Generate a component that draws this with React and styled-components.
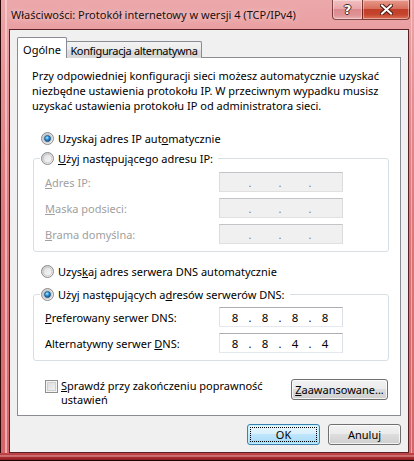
import React from 'react';
import styled, { createGlobalStyle } from 'styled-components';

const Global = createGlobalStyle`
  html, body { margin: 0; padding: 0; background: #ffffff; }
  body {
    font-family: "Noto Sans", "Segoe UI", sans-serif;
    font-size: 11px;
    color: #000;
  }
  * { box-sizing: border-box; }
`;

const Window = styled.div`
  width: 414px;
  height: 461px;
  display: flex;
  flex-direction: column;
  padding: 0 5px 8px 9px;
  background:
    linear-gradient(to top, #1c0404 0, #1c0404 1px, #8a1c20 1px, #a92f33 4px, #e7a2a4 5px, #b73c40 6px, #c04549 8px, transparent 8px),
    linear-gradient(to right, #2a0808 0, #2a0808 1px, transparent 1px, transparent 5px, rgba(255, 225, 225, 0.55) 5px, rgba(255, 225, 225, 0.55) 7px, transparent 7px),
    linear-gradient(to left, transparent 0, transparent 2px, rgba(255, 225, 225, 0.5) 2px, rgba(255, 225, 225, 0.5) 3px, transparent 3px),
    linear-gradient(to bottom, #eba8aa 0, #ea9fa2 30px, #e58f93 90px, #dc777c 220px, #d4656a 461px);
`;

const TitleBar = styled.div`
  height: 29px;
  display: flex;
  align-items: flex-start;
`;

const Title = styled.div`
  flex: 1;
  padding: 7px 0 0 2px;
  line-height: 15px;
  font-size: 11px;
  color: #1b1010;
  text-shadow: 0 0 6px rgba(255, 240, 240, 0.9);
  white-space: nowrap;
`;

const CaptionButtons = styled.div`
  display: flex;
  margin-right: -1px;
`;

const CaptionButton = styled.div`
  width: ${p => p.$w}px;
  height: 20px;
  display: flex;
  align-items: center;
  justify-content: center;
  border: 1px solid rgba(70, 15, 15, 0.65);
  border-top: none;
  border-radius: ${p => (p.$first ? '0 0 0 4px' : '0 0 4px 0')};
  margin-left: ${p => (p.$first ? '0' : '-1px')};
  box-shadow: inset 0 0 0 1px rgba(255, 235, 235, 0.45);
  background: ${p =>
    p.$close
      ? 'linear-gradient(to bottom, #e79a8c 0%, #d8705e 45%, #c2402b 50%, #c4432c 75%, #db7058 100%)'
      : 'linear-gradient(to bottom, #f1c0c1 0%, #e9a7a9 45%, #dc898c 50%, #df9396 80%, #eab1b2 100%)'};
`;

const HelpGlyph = styled.span`
  font-family: "DejaVu Sans", sans-serif;
  font-weight: bold;
  font-size: 13px;
  line-height: 1;
  color: #fff;
  text-shadow: -1px 0 #4a2424, 1px 0 #4a2424, 0 -1px #4a2424, 0 1px #4a2424;
`;

const Client = styled.div`
  flex: 1;
  display: flex;
  flex-direction: column;
  border: 1px solid #5a2227;
  background: #f0f0f0;
  padding: 7px 7px 7px 7px;
`;

const TabStrip = styled.div`
  height: 21px;
  display: flex;
  align-items: flex-end;
`;

const Tab = styled.div`
  position: relative;
  z-index: ${p => (p.$active ? 1 : 0)};
  height: ${p => (p.$active ? 21 : 17)}px;
  padding: ${p => (p.$active ? '4px 0 0 0' : '1px 0 0 0')};
  width: ${p => p.$w}px;
  margin-right: ${p => (p.$active ? '-1px' : '0')};
  text-align: center;
  line-height: 15px;
  white-space: nowrap;
  letter-spacing: ${p => (p.$active ? '0' : '-0.35px')};
  border: 1px solid #898c95;
  border-bottom: none;
  border-radius: 2px 2px 0 0;
  background: ${p => (p.$active ? '#ffffff' : 'linear-gradient(to bottom, #f3f3f3 0%, #ebebeb 50%, #dedede 50%, #d6d6d6 100%)')};
`;

const Panel = styled.div`
  margin-top: -1px;
  height: 359px;
  border: 1px solid #898c95;
  background: #ffffff;
  padding: 10px 11px 0 15px;
  display: flex;
  flex-direction: column;
`;

const Description = styled.p`
  margin: 0 0 0 -1px;
  line-height: 15px;
  color: #000;
`;

const OptionRow = styled.label`
  display: flex;
  align-items: center;
  gap: 4px;
  height: 15px;
  line-height: 15px;
  margin-left: ${p => p.$indent ?? 8}px;
  margin-top: ${p => p.$top ?? 0}px;
  white-space: nowrap;
`;

const Group = styled.fieldset`
  margin: ${p => p.$top}px 0 0 0;
  padding: 0 6px 7px 6px;
  border: 1px solid #d5dfe5;
  border-radius: 3px;
  min-width: 0;
`;

const Legend = styled.legend`
  padding: 0 5px 0 1px;
  margin: 0;
`;

const FieldGrid = styled.div`
  display: grid;
  grid-template-columns: 174px 124px;
  row-gap: 6px;
  margin: ${p => p.$top}px 0 0 5px;
  align-items: center;
`;

const FieldLabel = styled.span`
  color: ${p => (p.$disabled ? '#a0a0a0' : '#000')};
  line-height: 15px;
`;

const IpBox = styled.div`
  width: 124px;
  height: 20px;
  display: flex;
  align-items: center;
  padding: 0 2px;
  border: 1px solid;
  border-color: ${p => (p.$disabled ? '#c2c4c7 #dcdcdc #e0e0e0 #dcdcdc' : '#abadb3 #dbdfe6 #e3e9ef #e2e3ea')};
  background: ${p => (p.$disabled ? '#f0f0f0' : '#ffffff')};
`;

const Octet = styled.span`
  width: 26px;
  text-align: center;
  line-height: 15px;
  font-size: 11.5px;
`;

const Dot = styled.span`
  width: 4px;
  text-align: center;
  line-height: 15px;
  color: ${p => (p.$disabled ? '#7a7f95' : '#000')};
`;

const BottomRow = styled.div`
  display: flex;
  align-items: flex-start;
  justify-content: space-between;
  margin: 18px 1px 0 12px;
`;

const CheckLabel = styled.label`
  display: flex;
  align-items: flex-start;
  gap: 3px;
  line-height: 14px;
  padding-top: 1px;
`;

const CheckText = styled.span`
  margin-top: -1px;
`;

const CheckBox = styled.span`
  flex: none;
  width: 13px;
  height: 13px;
  border: 1px solid #8e8f8f;
  background: linear-gradient(135deg, #d8d8d8 0%, #f6f6f6 100%);
  box-shadow: inset 0 0 0 1px #f4f4f4, inset 0 0 0 2px #cfcfcf;
`;

const Button = styled.button`
  font: inherit;
  font-size: 11px;
  color: #000;
  width: ${p => p.$w}px;
  height: 21px;
  padding: 0;
  line-height: 15px;
  border: 1px solid ${p => (p.$default ? '#3c7fb1' : '#707070')};
  border-radius: 3px;
  background: ${p =>
    p.$default
      ? 'linear-gradient(to bottom, #eaf6fd 0%, #d9f0fc 45%, #bee6fd 50%, #a7d9f5 100%)'
      : 'linear-gradient(to bottom, #f2f2f2 0%, #ebebeb 45%, #dddddd 50%, #cfcfcf 100%)'};
  box-shadow: inset 0 0 0 1px ${p => (p.$default ? 'rgba(190, 240, 255, 0.9)' : 'rgba(255, 255, 255, 0.75)')};
  outline: ${p => (p.$default ? '1px dotted #000' : 'none')};
  outline-offset: -4px;
`;

const ButtonBar = styled.div`
  display: flex;
  justify-content: flex-end;
  gap: 8px;
  margin-top: 8px;
`;

function Radio({ checked }) {
  return (
    <svg width="13" height="13" viewBox="0 0 13 13" style={{ flex: 'none' }}>
      <defs>
        <linearGradient id="rOuter" x1="0" y1="0" x2="1" y2="1">
          <stop offset="0" stopColor="#c8c8c8" />
          <stop offset="1" stopColor="#fbfbfb" />
        </linearGradient>
        <linearGradient id="rInner" x1="0" y1="0" x2="1" y2="1">
          <stop offset="0" stopColor="#dcdcdc" />
          <stop offset="1" stopColor="#fafafa" />
        </linearGradient>
        <radialGradient id="rDot" cx="0.42" cy="0.38" r="0.65">
          <stop offset="0" stopColor="#b6ecff" />
          <stop offset="0.45" stopColor="#2f98dd" />
          <stop offset="1" stopColor="#0f3f78" />
        </radialGradient>
      </defs>
      <circle cx="6.5" cy="6.5" r="6" fill="url(#rOuter)" stroke="#8b8c8e" strokeWidth="1" />
      <circle cx="6.5" cy="6.5" r="4.3" fill="url(#rInner)" stroke="#b9b9b9" strokeWidth="0.6" />
      {checked && <circle cx="6.5" cy="6.5" r="3.1" fill="url(#rDot)" stroke="#18477c" strokeWidth="0.7" />}
    </svg>
  );
}

function CloseGlyph() {
  return (
    <svg width="13" height="11" viewBox="0 0 13 11">
      <path d="M2 1.5 L11 9.5 M11 1.5 L2 9.5" stroke="#4a1a12" strokeWidth="4" strokeLinecap="square" />
      <path d="M2 1.5 L11 9.5 M11 1.5 L2 9.5" stroke="#ffffff" strokeWidth="2" strokeLinecap="square" />
    </svg>
  );
}

function IpField({ values, disabled }) {
  const parts = values || ['', '', '', ''];
  return (
    <IpBox $disabled={disabled}>
      <Octet>{parts[0]}</Octet>
      <Dot $disabled={disabled}>.</Dot>
      <Octet>{parts[1]}</Octet>
      <Dot $disabled={disabled}>.</Dot>
      <Octet>{parts[2]}</Octet>
      <Dot $disabled={disabled}>.</Dot>
      <Octet>{parts[3]}</Octet>
    </IpBox>
  );
}

export default function App() {
  return (
    <>
      <Global />
      <Window>
        <TitleBar>
          <Title>Właściwości: Protokół internetowy w wersji 4 (TCP/IPv4)</Title>
          <CaptionButtons>
            <CaptionButton $w={31} $first>
              <HelpGlyph>?</HelpGlyph>
            </CaptionButton>
            <CaptionButton $w={48} $close>
              <CloseGlyph />
            </CaptionButton>
          </CaptionButtons>
        </TitleBar>
        <Client>
          <TabStrip>
            <Tab $active $w={50}>Ogólne</Tab>
            <Tab $w={136}>Konfiguracja alternatywna</Tab>
          </TabStrip>
          <Panel>
            <Description>
              Przy odpowiedniej konfiguracji sieci możesz automatycznie uzyskać
              <br />
              niezbędne ustawienia protokołu IP. W przeciwnym wypadku musisz
              <br />
              uzyskać ustawienia protokołu IP od administratora sieci.
            </Description>

            <OptionRow $top={18}>
              <Radio checked />
              <span>Uzyskaj adres IP aut<u>o</u>matycznie</span>
            </OptionRow>

            <Group $top={5}>
              <Legend>
                <OptionRow $indent={0}>
                  <Radio />
                  <span><u>U</u>żyj następującego adresu IP:</span>
                </OptionRow>
              </Legend>
              <FieldGrid $top={6}>
                <FieldLabel $disabled><u>A</u>dres IP:</FieldLabel>
                <IpField disabled />
                <FieldLabel $disabled><u>M</u>aska podsieci:</FieldLabel>
                <IpField disabled />
                <FieldLabel $disabled><u>B</u>rama domyślna:</FieldLabel>
                <IpField disabled />
              </FieldGrid>
            </Group>

            <OptionRow $top={12}>
              <Radio />
              <span>Uzys<u>k</u>aj adres serwera DNS automatycznie</span>
            </OptionRow>

            <Group $top={8}>
              <Legend>
                <OptionRow $indent={0}>
                  <Radio checked />
                  <span>Użyj następujących a<u>d</u>resów serwerów DNS:</span>
                </OptionRow>
              </Legend>
              <FieldGrid $top={5}>
                <FieldLabel><u>P</u>referowany serwer DNS:</FieldLabel>
                <IpField values={['8', '8', '8', '8']} />
                <FieldLabel>Alternatywny serwer <u>D</u>NS:</FieldLabel>
                <IpField values={['8', '8', '4', '4']} />
              </FieldGrid>
            </Group>

            <BottomRow>
              <CheckLabel>
                <CheckBox />
                <CheckText>
                  <u>S</u>prawdź przy zakończeniu poprawność
                  <br />
                  ustawień
                </CheckText>
              </CheckLabel>
              <Button $w={97}><u>Z</u>aawansowane...</Button>
            </BottomRow>
          </Panel>
          <ButtonBar>
            <Button $w={73} $default>OK</Button>
            <Button $w={73}>Anuluj</Button>
          </ButtonBar>
        </Client>
      </Window>
    </>
  );
}
